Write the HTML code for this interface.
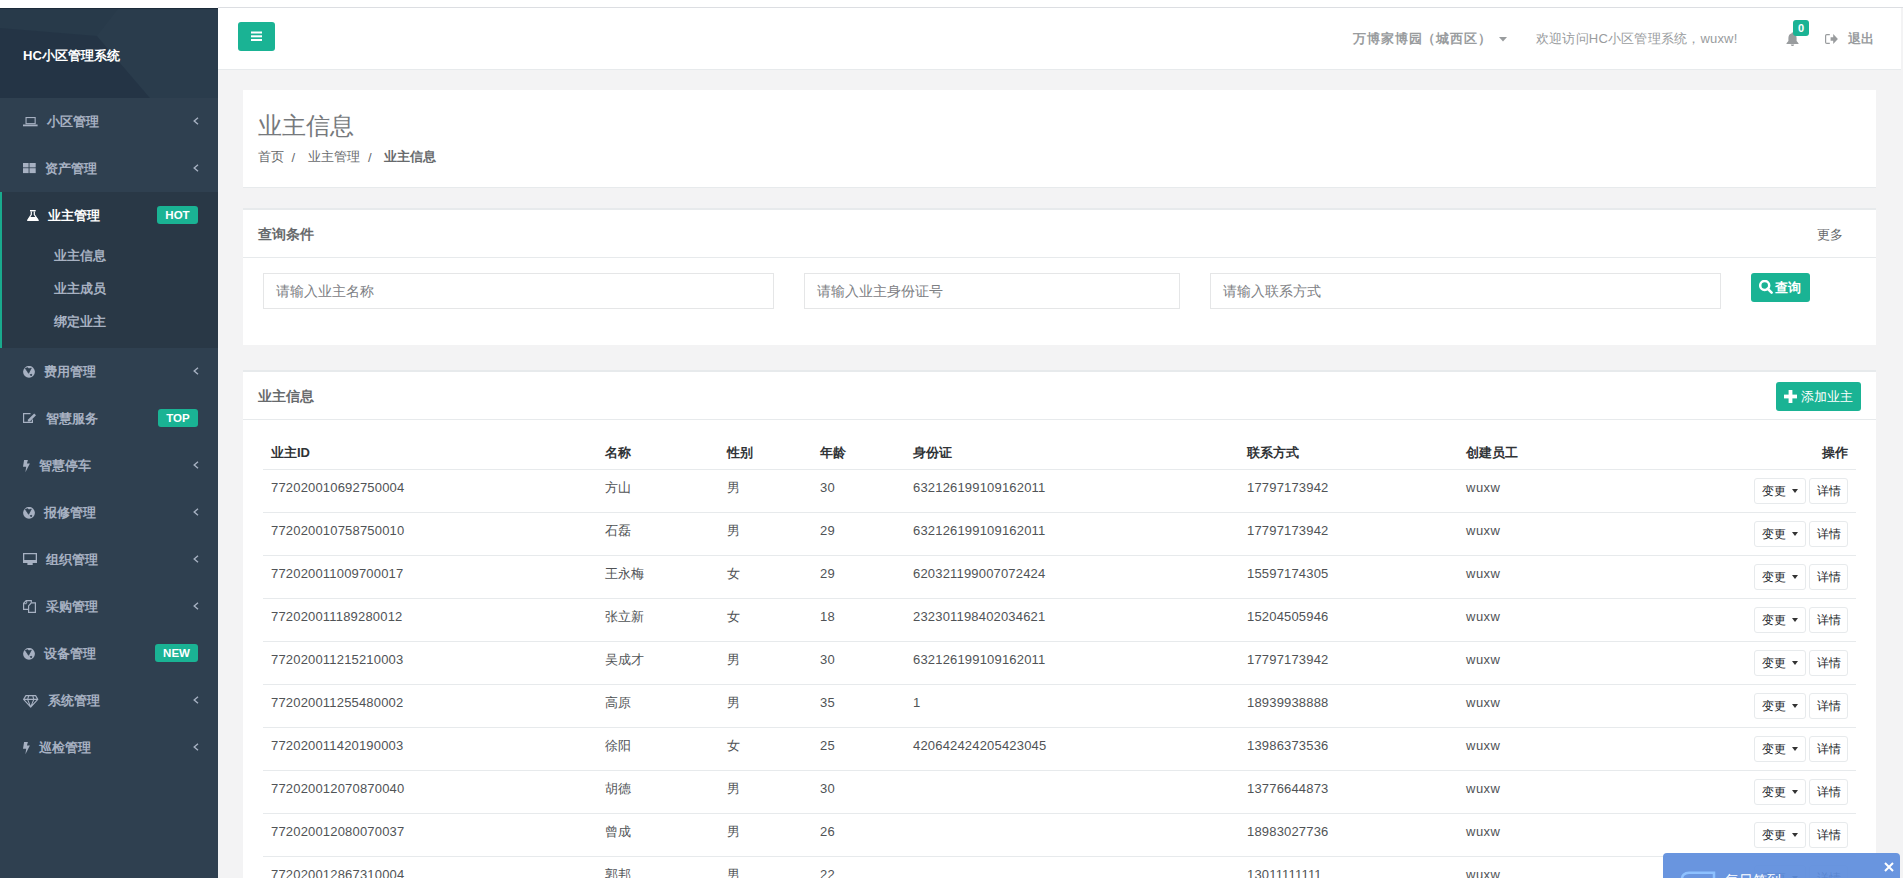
<!DOCTYPE html>
<html><head><meta charset="utf-8">
<style>
*{box-sizing:border-box;margin:0;padding:0}
html,body{width:1903px;height:878px;overflow:hidden}
body{background:#f3f3f4;font-family:"Liberation Sans",sans-serif;font-size:13px;color:#676a6c;position:relative}
.abs{position:absolute;white-space:nowrap}
#topstrip{left:0;top:0;width:1903px;height:8px;background:#fff}
#topline{left:218px;top:7px;width:1685px;height:1px;background:#dcdee2}
#sidebar{left:0;top:8px;width:218px;height:870px;background:#2f4050}
#sbtop{left:0;top:8px;width:218px;height:1px;background:#1c2b3a}
#navhdr{left:0;top:9px;width:218px;height:89px;overflow:hidden}
.brand{left:23px;top:46px;color:#fff;font-weight:bold;font-size:13px;line-height:19px}
.stx{font-weight:bold;line-height:19px;color:#a7b1c2}
.badge{height:18px;background:#1ab394;border-radius:3px;color:#fff;font-weight:bold;font-size:11.5px;line-height:18px;text-align:center}
#active{left:0;top:192px;width:218px;height:156px;background:#293846}
#activeb{left:0;top:192px;width:2px;height:156px;background:#19aa8d}
#header{left:218px;top:8px;width:1683px;height:62px;background:#fff;border-bottom:1px solid #e7eaec}
.menubtn{left:238px;top:22px;width:37px;height:29px;background:#1ab394;border-radius:3px}
.hdtx{color:#999c9e;line-height:19px}
.box{position:absolute;left:243px;width:1633px;background:#fff}
.hl{position:absolute;left:263px;width:1593px;height:1px;background:#e7eaec}
.th{font-weight:bold;color:#303336;line-height:19px}
.td{line-height:19px;color:#505356;letter-spacing:0.18px}
.obtn{height:26px;border:1px solid #e7eaec;border-radius:3px;background:#fff;color:#212529;font-size:12px;line-height:24px;padding-left:7px}
.caret{display:inline-block;width:0;height:0;border-top:4px solid #333;border-left:3.5px solid transparent;border-right:3.5px solid transparent;vertical-align:middle;margin-left:6px;margin-top:-2px}
.inp{position:absolute;top:273px;height:36px;border:1px solid #e5e6e7;background:#fff;color:#7d8084;padding-left:12px;line-height:34px;font-size:14px}
.gbtn{position:absolute;background:#1ab394;border-radius:3px;color:#fff}
</style></head><body>
<div id="topstrip" class="abs"></div>
<div id="topline" class="abs"></div>
<div id="sidebar" class="abs"></div>
<div id="sbtop" class="abs"></div>
<div id="navhdr" class="abs">
<svg width="218" height="89" viewBox="0 0 218 89" style="display:block">
<rect width="218" height="89" fill="#283a4a"/>
<path d="M0 19L97 27L150 89H0Z" fill="#233344" opacity="0.75"/>
<path d="M97 27L118 0H218V89H150Z" fill="#2b3e4f" opacity="0.55"/>
</svg>
</div>
<div class="abs brand">HC小区管理系统</div>
<div id="active" class="abs"></div>
<div id="activeb" class="abs"></div>
<svg class="abs" style="left:22.5px;top:116.8px" width="15" height="10" viewBox="0 0 15 10"><rect x="3.05" y="0.55" width="9.1" height="6.1" fill="none" stroke="#a7b1c2" stroke-width="1.1"/><rect x="0" y="7.5" width="14.6" height="1.8" fill="#a7b1c2"/></svg>
<div class="abs stx" style="left:47px;top:111.5px;color:#a7b1c2">小区管理</div>
<svg class="abs" style="left:193px;top:116.5px" width="6" height="8" viewBox="0 0 6 8"><path d="M5 0.8L1.2 4L5 7.2" fill="none" stroke="#a7b1c2" stroke-width="1.4"/></svg>
<svg class="abs" style="left:22.8px;top:162.7px" width="13" height="11" viewBox="0 0 13 11"><rect x="0" y="0" width="5.6" height="4.4" fill="#a7b1c2"/><rect x="6.5" y="0" width="6.2" height="4.4" fill="#a7b1c2"/><rect x="0" y="5.2" width="5.6" height="4.9" fill="#a7b1c2"/><rect x="6.5" y="5.2" width="6.2" height="4.9" fill="#a7b1c2"/></svg>
<div class="abs stx" style="left:44.5px;top:158.5px;color:#a7b1c2">资产管理</div>
<svg class="abs" style="left:193px;top:163.5px" width="6" height="8" viewBox="0 0 6 8"><path d="M5 0.8L1.2 4L5 7.2" fill="none" stroke="#a7b1c2" stroke-width="1.4"/></svg>
<svg class="abs" style="left:27.2px;top:209.6px" width="12" height="12" viewBox="0 0 12 12"><rect x="3" y="0" width="5.7" height="1.4" fill="#fff"/><path d="M4.3 1.4V4.6L0.5 10.5M7.3 1.4V4.6L11.4 10.5" fill="none" stroke="#fff" stroke-width="1.2"/><path d="M2.4 6.9H9.3L11.9 11.1H0Z" fill="#fff"/></svg>
<div class="abs stx" style="left:48.3px;top:205.5px;color:#fff">业主管理</div>
<div class="abs badge" style="left:157px;top:205.5px;width:41px">HOT</div>
<svg class="abs" style="left:22.8px;top:365.6px" width="12" height="12" viewBox="0 0 12 12"><circle cx="6" cy="5.8" r="5.9" fill="#a7b1c2"/><path d="M2.3 2.3L5 1.8L5.9 2.9L8.3 2.1L5.6 7.3Z M7.2 8.6L8.8 8.3L8.2 9.9Z" fill="#2f4050" stroke="#2f4050" stroke-width="0.8" stroke-linejoin="round"/></svg>
<div class="abs stx" style="left:43.5px;top:361.5px;color:#a7b1c2">费用管理</div>
<svg class="abs" style="left:193px;top:366.5px" width="6" height="8" viewBox="0 0 6 8"><path d="M5 0.8L1.2 4L5 7.2" fill="none" stroke="#a7b1c2" stroke-width="1.4"/></svg>
<svg class="abs" style="left:23px;top:413.0px" width="14" height="11" viewBox="0 0 14 11"><path d="M7.5 0.6H0.6V9.4H9.4V6.5" fill="none" stroke="#a7b1c2" stroke-width="1.2"/><path d="M4.6 8.6L5.1 6.6L11.2 0.5L13 2.3L6.9 8.4Z" fill="#a7b1c2"/></svg>
<div class="abs stx" style="left:45.6px;top:408.5px;color:#a7b1c2">智慧服务</div>
<div class="abs badge" style="left:158px;top:408.5px;width:40px">TOP</div>
<svg class="abs" style="left:23px;top:459.7px" width="7" height="13" viewBox="0 0 7 13"><path d="M1.1 0H4.9L3.9 3.6H6.9L2.4 12.2L3.2 6.7H0Z" fill="#a7b1c2"/></svg>
<div class="abs stx" style="left:39.2px;top:455.5px;color:#a7b1c2">智慧停车</div>
<svg class="abs" style="left:193px;top:460.5px" width="6" height="8" viewBox="0 0 6 8"><path d="M5 0.8L1.2 4L5 7.2" fill="none" stroke="#a7b1c2" stroke-width="1.4"/></svg>
<svg class="abs" style="left:22.8px;top:506.6px" width="12" height="12" viewBox="0 0 12 12"><circle cx="6" cy="5.8" r="5.9" fill="#a7b1c2"/><path d="M2.3 2.3L5 1.8L5.9 2.9L8.3 2.1L5.6 7.3Z M7.2 8.6L8.8 8.3L8.2 9.9Z" fill="#2f4050" stroke="#2f4050" stroke-width="0.8" stroke-linejoin="round"/></svg>
<div class="abs stx" style="left:43.5px;top:502.5px;color:#a7b1c2">报修管理</div>
<svg class="abs" style="left:193px;top:507.5px" width="6" height="8" viewBox="0 0 6 8"><path d="M5 0.8L1.2 4L5 7.2" fill="none" stroke="#a7b1c2" stroke-width="1.4"/></svg>
<svg class="abs" style="left:23px;top:552.9px" width="14" height="12" viewBox="0 0 14 12"><path d="M0 0H14V10H0Z M1.3 1.3V6.9H12.7V1.3Z" fill="#a7b1c2" fill-rule="evenodd"/><rect x="4.4" y="10" width="5.3" height="2" fill="#a7b1c2"/></svg>
<div class="abs stx" style="left:46.3px;top:549.5px;color:#a7b1c2">组织管理</div>
<svg class="abs" style="left:193px;top:554.5px" width="6" height="8" viewBox="0 0 6 8"><path d="M5 0.8L1.2 4L5 7.2" fill="none" stroke="#a7b1c2" stroke-width="1.4"/></svg>
<svg class="abs" style="left:23px;top:599.9px" width="14" height="14" viewBox="0 0 14 14"><path d="M5 9.4H0.6V3.3L3.2 0.6H8.3V2.4" fill="none" stroke="#a7b1c2" stroke-width="1.2"/><path d="M3.7 3.2V0.9 M0.9 3.7H3.7" fill="none" stroke="#a7b1c2" stroke-width="1"/><path d="M5.6 5.8L8.3 2.8H12.4V12.4H5.6Z" fill="none" stroke="#a7b1c2" stroke-width="1.2"/></svg>
<div class="abs stx" style="left:45.6px;top:596.5px;color:#a7b1c2">采购管理</div>
<svg class="abs" style="left:193px;top:601.5px" width="6" height="8" viewBox="0 0 6 8"><path d="M5 0.8L1.2 4L5 7.2" fill="none" stroke="#a7b1c2" stroke-width="1.4"/></svg>
<svg class="abs" style="left:22.8px;top:647.6px" width="12" height="12" viewBox="0 0 12 12"><circle cx="6" cy="5.8" r="5.9" fill="#a7b1c2"/><path d="M2.3 2.3L5 1.8L5.9 2.9L8.3 2.1L5.6 7.3Z M7.2 8.6L8.8 8.3L8.2 9.9Z" fill="#2f4050" stroke="#2f4050" stroke-width="0.8" stroke-linejoin="round"/></svg>
<div class="abs stx" style="left:43.5px;top:643.5px;color:#a7b1c2">设备管理</div>
<div class="abs badge" style="left:155px;top:643.5px;width:43px">NEW</div>
<svg class="abs" style="left:22.8px;top:694.5px" width="16" height="13" viewBox="0 0 16 13"><path d="M2.9 0.6H12.6L14.8 4.4L7.7 12.1L0.6 4.4Z M0.6 4.4H14.8 M5.8 0.6L4.6 4.4L7.7 12.1L10.8 4.4L9.7 0.6" fill="none" stroke="#a7b1c2" stroke-width="1.1" stroke-linejoin="round"/></svg>
<div class="abs stx" style="left:47.8px;top:690.5px;color:#a7b1c2">系统管理</div>
<svg class="abs" style="left:193px;top:695.5px" width="6" height="8" viewBox="0 0 6 8"><path d="M5 0.8L1.2 4L5 7.2" fill="none" stroke="#a7b1c2" stroke-width="1.4"/></svg>
<svg class="abs" style="left:23px;top:741.7px" width="7" height="13" viewBox="0 0 7 13"><path d="M1.1 0H4.9L3.9 3.6H6.9L2.4 12.2L3.2 6.7H0Z" fill="#a7b1c2"/></svg>
<div class="abs stx" style="left:39.2px;top:737.5px;color:#a7b1c2">巡检管理</div>
<svg class="abs" style="left:193px;top:742.5px" width="6" height="8" viewBox="0 0 6 8"><path d="M5 0.8L1.2 4L5 7.2" fill="none" stroke="#a7b1c2" stroke-width="1.4"/></svg>
<div class="abs stx" style="left:54px;top:246.0px">业主信息</div>
<div class="abs stx" style="left:54px;top:279.0px">业主成员</div>
<div class="abs stx" style="left:54px;top:312.0px">绑定业主</div>

<div id="header" class="abs"></div>
<div class="abs menubtn"><svg width="37" height="29" viewBox="0 0 37 29"><rect x="13" y="9.5" width="11" height="2" fill="#fff"/><rect x="13" y="13.3" width="11" height="2" fill="#fff"/><rect x="13" y="17" width="11" height="2" fill="#fff"/></svg></div>
<div class="abs hdtx" style="left:1353px;top:29px;font-weight:bold;letter-spacing:0.9px">万博家博园（城西区）</div>
<svg class="abs" style="left:1499px;top:37px" width="8" height="5" viewBox="0 0 8 5"><path d="M0 0H8L4 4.5Z" fill="#999c9e"/></svg>
<div class="abs hdtx" style="left:1536px;top:29px;letter-spacing:0.2px">欢迎访问HC小区管理系统，wuxw!</div>
<svg class="abs" style="left:1786px;top:32px" width="13" height="14" viewBox="0 0 13 14"><path d="M6.5 0.5C7.2 0.5 7.5 1 7.5 1.5C9.6 2 10.6 3.8 10.6 6V9L12.5 11.2V12H0.5V11.2L2.4 9V6C2.4 3.8 3.4 2 5.5 1.5C5.5 1 5.8 0.5 6.5 0.5Z M4.8 12.5H8.2C8.2 13.4 7.4 14 6.5 14C5.6 14 4.8 13.4 4.8 12.5Z" fill="#999c9e"/></svg>
<div class="abs" style="left:1793px;top:20px;width:16px;height:16px;background:#1ab394;border-radius:3px;color:#fff;font-weight:bold;font-size:11px;line-height:17px;text-align:center">0</div>
<svg class="abs" style="left:1825px;top:34px" width="13" height="11" viewBox="0 0 13 11"><path d="M4.8 0.6H1.8C1.1 0.6 0.6 1.1 0.6 1.8V8.2C0.6 8.9 1.1 9.4 1.8 9.4H4.8" fill="none" stroke="#999c9e" stroke-width="1.2"/><path d="M5.6 3.3H8.2V0L12.9 5L8.2 10V6.7H5.6Z" fill="#999c9e"/></svg>
<div class="abs hdtx" style="left:1848px;top:29px;font-weight:bold">退出</div>

<!-- page heading -->
<div class="box" style="top:90px;height:98px;border-bottom:1px solid #e7eaec"></div>
<div class="abs" style="left:258px;top:110px;font-size:24px;font-weight:100;line-height:32px;color:#76797c">业主信息</div>
<div class="abs" style="left:258px;top:147px;line-height:19px">首页</div><div class="abs" style="left:291.5px;top:148px;line-height:19px">/</div><div class="abs" style="left:308px;top:147px;line-height:19px">业主管理</div><div class="abs" style="left:368px;top:148px;line-height:19px">/</div><div class="abs" style="left:384px;top:147px;line-height:19px;font-weight:bold">业主信息</div>

<!-- query box -->
<div class="box" style="top:208px;height:137px;border-top:2px solid #e7eaec"></div>
<div class="hl" style="left:243px;width:1633px;top:257px"></div>
<div class="abs" style="left:258px;top:225px;font-weight:bold;line-height:19px;font-size:14px">查询条件</div>
<div class="abs" style="left:1817px;top:225px;line-height:19px;color:#676a6c">更多</div>
<div class="inp" style="left:263px;width:511px">请输入业主名称</div>
<div class="inp" style="left:804px;width:376px">请输入业主身份证号</div>
<div class="inp" style="left:1210px;width:511px">请输入联系方式</div>
<div class="gbtn" style="left:1751px;top:273px;width:59px;height:29px">
<svg class="abs" style="left:8px;top:7px" width="14" height="14" viewBox="0 0 14 14"><circle cx="5.7" cy="5.5" r="4.5" fill="none" stroke="#fff" stroke-width="2.5"/><path d="M8.6 8.6L12.6 12.6" stroke="#fff" stroke-width="2.6" stroke-linecap="round"/></svg>
<div class="abs" style="left:24px;top:5px;font-weight:bold;line-height:19px">查询</div>
</div>

<!-- table box -->
<div class="box" style="top:370px;height:508px;border-top:2px solid #e7eaec"></div>
<div class="hl" style="left:243px;width:1633px;top:419px"></div>
<div class="abs" style="left:258px;top:387px;font-weight:bold;line-height:19px;font-size:14px">业主信息</div>
<div class="gbtn" style="left:1776px;top:382px;width:85px;height:29px">
<svg class="abs" style="left:8px;top:8px" width="13" height="13" viewBox="0 0 13 13"><rect x="4.6" y="0" width="3.8" height="13" fill="#fff"/><rect x="0" y="4.6" width="13" height="3.8" fill="#fff"/></svg>
<div class="abs" style="left:25px;top:5px;line-height:19px">添加业主</div>
</div>
<div class="abs th" style="left:271px;top:443px">业主ID</div>
<div class="abs th" style="left:605px;top:443px">名称</div>
<div class="abs th" style="left:727px;top:443px">性别</div>
<div class="abs th" style="left:820px;top:443px">年龄</div>
<div class="abs th" style="left:913px;top:443px">身份证</div>
<div class="abs th" style="left:1247px;top:443px">联系方式</div>
<div class="abs th" style="left:1466px;top:443px">创建员工</div>
<div class="abs th" style="left:1700px;width:148px;text-align:right;top:443px">操作</div>
<div class="abs hl" style="top:469px"></div>
<div class="abs td" style="left:271px;top:478.0px">772020010692750004</div>
<div class="abs td" style="left:605px;top:478.0px">方山</div>
<div class="abs td" style="left:727px;top:478.0px">男</div>
<div class="abs td" style="left:820px;top:478.0px">30</div>
<div class="abs td" style="left:913px;top:478.0px">632126199109162011</div>
<div class="abs td" style="left:1247px;top:478.0px">17797173942</div>
<div class="abs td" style="left:1466px;top:478.0px;letter-spacing:0.5px">wuxw</div>
<div class="abs obtn" style="left:1754px;top:478px;width:52px">变更<span class="caret"></span></div>
<div class="abs obtn" style="left:1809px;top:478px;width:39px">详情</div>
<div class="abs hl" style="top:512px"></div>
<div class="abs td" style="left:271px;top:521.0px">772020010758750010</div>
<div class="abs td" style="left:605px;top:521.0px">石磊</div>
<div class="abs td" style="left:727px;top:521.0px">男</div>
<div class="abs td" style="left:820px;top:521.0px">29</div>
<div class="abs td" style="left:913px;top:521.0px">632126199109162011</div>
<div class="abs td" style="left:1247px;top:521.0px">17797173942</div>
<div class="abs td" style="left:1466px;top:521.0px;letter-spacing:0.5px">wuxw</div>
<div class="abs obtn" style="left:1754px;top:521px;width:52px">变更<span class="caret"></span></div>
<div class="abs obtn" style="left:1809px;top:521px;width:39px">详情</div>
<div class="abs hl" style="top:555px"></div>
<div class="abs td" style="left:271px;top:564.0px">772020011009700017</div>
<div class="abs td" style="left:605px;top:564.0px">王永梅</div>
<div class="abs td" style="left:727px;top:564.0px">女</div>
<div class="abs td" style="left:820px;top:564.0px">29</div>
<div class="abs td" style="left:913px;top:564.0px">620321199007072424</div>
<div class="abs td" style="left:1247px;top:564.0px">15597174305</div>
<div class="abs td" style="left:1466px;top:564.0px;letter-spacing:0.5px">wuxw</div>
<div class="abs obtn" style="left:1754px;top:564px;width:52px">变更<span class="caret"></span></div>
<div class="abs obtn" style="left:1809px;top:564px;width:39px">详情</div>
<div class="abs hl" style="top:598px"></div>
<div class="abs td" style="left:271px;top:607.0px">772020011189280012</div>
<div class="abs td" style="left:605px;top:607.0px">张立新</div>
<div class="abs td" style="left:727px;top:607.0px">女</div>
<div class="abs td" style="left:820px;top:607.0px">18</div>
<div class="abs td" style="left:913px;top:607.0px">232301198402034621</div>
<div class="abs td" style="left:1247px;top:607.0px">15204505946</div>
<div class="abs td" style="left:1466px;top:607.0px;letter-spacing:0.5px">wuxw</div>
<div class="abs obtn" style="left:1754px;top:607px;width:52px">变更<span class="caret"></span></div>
<div class="abs obtn" style="left:1809px;top:607px;width:39px">详情</div>
<div class="abs hl" style="top:641px"></div>
<div class="abs td" style="left:271px;top:650.0px">772020011215210003</div>
<div class="abs td" style="left:605px;top:650.0px">吴成才</div>
<div class="abs td" style="left:727px;top:650.0px">男</div>
<div class="abs td" style="left:820px;top:650.0px">30</div>
<div class="abs td" style="left:913px;top:650.0px">632126199109162011</div>
<div class="abs td" style="left:1247px;top:650.0px">17797173942</div>
<div class="abs td" style="left:1466px;top:650.0px;letter-spacing:0.5px">wuxw</div>
<div class="abs obtn" style="left:1754px;top:650px;width:52px">变更<span class="caret"></span></div>
<div class="abs obtn" style="left:1809px;top:650px;width:39px">详情</div>
<div class="abs hl" style="top:684px"></div>
<div class="abs td" style="left:271px;top:693.0px">772020011255480002</div>
<div class="abs td" style="left:605px;top:693.0px">高原</div>
<div class="abs td" style="left:727px;top:693.0px">男</div>
<div class="abs td" style="left:820px;top:693.0px">35</div>
<div class="abs td" style="left:913px;top:693.0px">1</div>
<div class="abs td" style="left:1247px;top:693.0px">18939938888</div>
<div class="abs td" style="left:1466px;top:693.0px;letter-spacing:0.5px">wuxw</div>
<div class="abs obtn" style="left:1754px;top:693px;width:52px">变更<span class="caret"></span></div>
<div class="abs obtn" style="left:1809px;top:693px;width:39px">详情</div>
<div class="abs hl" style="top:727px"></div>
<div class="abs td" style="left:271px;top:736.0px">772020011420190003</div>
<div class="abs td" style="left:605px;top:736.0px">徐阳</div>
<div class="abs td" style="left:727px;top:736.0px">女</div>
<div class="abs td" style="left:820px;top:736.0px">25</div>
<div class="abs td" style="left:913px;top:736.0px">420642424205423045</div>
<div class="abs td" style="left:1247px;top:736.0px">13986373536</div>
<div class="abs td" style="left:1466px;top:736.0px;letter-spacing:0.5px">wuxw</div>
<div class="abs obtn" style="left:1754px;top:736px;width:52px">变更<span class="caret"></span></div>
<div class="abs obtn" style="left:1809px;top:736px;width:39px">详情</div>
<div class="abs hl" style="top:770px"></div>
<div class="abs td" style="left:271px;top:779.0px">772020012070870040</div>
<div class="abs td" style="left:605px;top:779.0px">胡德</div>
<div class="abs td" style="left:727px;top:779.0px">男</div>
<div class="abs td" style="left:820px;top:779.0px">30</div>
<div class="abs td" style="left:1247px;top:779.0px">13776644873</div>
<div class="abs td" style="left:1466px;top:779.0px;letter-spacing:0.5px">wuxw</div>
<div class="abs obtn" style="left:1754px;top:779px;width:52px">变更<span class="caret"></span></div>
<div class="abs obtn" style="left:1809px;top:779px;width:39px">详情</div>
<div class="abs hl" style="top:813px"></div>
<div class="abs td" style="left:271px;top:822.0px">772020012080070037</div>
<div class="abs td" style="left:605px;top:822.0px">曾成</div>
<div class="abs td" style="left:727px;top:822.0px">男</div>
<div class="abs td" style="left:820px;top:822.0px">26</div>
<div class="abs td" style="left:1247px;top:822.0px">18983027736</div>
<div class="abs td" style="left:1466px;top:822.0px;letter-spacing:0.5px">wuxw</div>
<div class="abs obtn" style="left:1754px;top:822px;width:52px">变更<span class="caret"></span></div>
<div class="abs obtn" style="left:1809px;top:822px;width:39px">详情</div>
<div class="abs hl" style="top:856px"></div>
<div class="abs td" style="left:271px;top:865.0px">772020012867310004</div>
<div class="abs td" style="left:605px;top:865.0px">郭邦</div>
<div class="abs td" style="left:727px;top:865.0px">男</div>
<div class="abs td" style="left:820px;top:865.0px">22</div>
<div class="abs td" style="left:1247px;top:865.0px">13011111111</div>
<div class="abs td" style="left:1466px;top:865.0px;letter-spacing:0.5px">wuxw</div>
<div class="abs obtn" style="left:1754px;top:865px;width:52px">变更<span class="caret"></span></div>
<div class="abs obtn" style="left:1809px;top:865px;width:39px">详情</div>
<div class="abs hl" style="top:899px"></div>

<!-- popup -->
<div class="abs" style="left:1663px;top:853px;width:237px;height:40px;background:rgba(94,141,221,0.93);border-radius:4px 4px 0 0"></div>
<svg class="abs" style="left:1884px;top:862px" width="10" height="10" viewBox="0 0 10 10"><path d="M1 1L9 9M9 1L1 9" stroke="#fff" stroke-width="2"/></svg>
<svg class="abs" style="left:1680px;top:871px" width="40" height="10" viewBox="0 0 40 10"><path d="M1.8 10V9C1.8 4.5 4.5 1.8 9 1.8H34V10" fill="none" stroke="#8ec1ff" stroke-width="2.5"/></svg>
<div class="abs" style="left:1725px;top:870px;color:#fff;font-size:14px;line-height:20px">每日签到</div>
</body></html>
